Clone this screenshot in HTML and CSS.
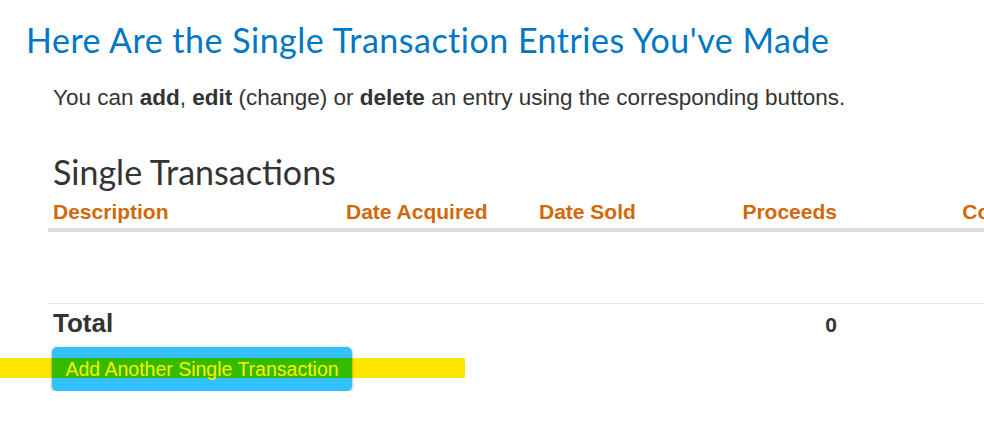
FILE: index.html
```html
<!DOCTYPE html>
<html lang="en">
<head>
<meta charset="UTF-8" />
<title>Single Transactions</title>
<link rel="stylesheet" href="styles.css">
</head>
<body>

<div id="page">
  <h1 class="page-title">Here Are the Single Transaction Entries You've Made</h1>
  <p class="intro">You can <b>add</b>, <b>edit</b> (change) or <b>delete</b> an entry using the corresponding buttons.</p>

  <div class="section">
    <h2 class="section-title">Single Transactions</h2>

    <div class="table">
      <div class="row head">
        <div class="cell">Description</div>
        <div class="cell">Date Acquired</div>
        <div class="cell">Date Sold</div>
        <div class="cell num">Proceeds</div>
        <div class="cell num">Cost</div>
      </div>
      <div class="rows-empty"></div>
      <div class="row total">
        <div class="cell label">Total</div>
        <div class="cell"></div>
        <div class="cell"></div>
        <div class="cell num">0</div>
        <div class="cell"></div>
      </div>
    </div>

    <div class="actions">
      <div class="marker"></div>
      <button class="add-btn">Add Another Single Transaction</button>
    </div>
  </div>
</div>

</body>
</html>
```

FILE: styles.css
```css
body {
  margin: 0;
  font-family: "Liberation Sans", Arial, sans-serif;
  color: #333;
  background: #fff;
  overflow: hidden;
}
#page {
  padding: 20px 0 0 26px;
}
.page-title {
  font-family: Lato, "Open Sans", sans-serif;
  font-weight: 400;
  font-size: 34px;
  letter-spacing: 0.5px;
  color: #0077c5;
  margin: 0;
  line-height: 40px;
}
.intro {
  font-size: 22.5px;
  margin: 25px 0 0 27px;
  line-height: 26px;
}
.section {
  margin: 41px 0 0 22px;
}
.section-title {
  font-family: Lato, "Open Sans", sans-serif;
  font-weight: 400;
  font-size: 34px;
  margin: 0 0 0 5px;
  line-height: 40px;
}
.table {
  width: 1100px;
  margin-top: 8px;
}
.row {
  display: grid;
  grid-template-columns: 293px 193px 154px 154px 172px;
}
.cell {
  padding: 0 5px;
  white-space: nowrap;
}
.cell.num {
  text-align: right;
}
.head {
  color: #d0690a;
  font-weight: bold;
  font-size: 21px;
  line-height: 24px;
  padding-bottom: 4px;
  border-bottom: 4px solid #dddddd;
}
.rows-empty {
  height: 71px;
}
.total {
  border-top: 1px solid #e3e3e3;
  align-items: baseline;
  font-weight: bold;
  font-size: 21px;
  line-height: 30px;
  padding-top: 4px;
}
.total .label {
  font-size: 26px;
}
.actions {
  position: relative;
  margin-top: 7px;
}
.marker {
  position: absolute;
  left: -48px;
  top: 11px;
  width: 465px;
  height: 20px;
  background: #ffe600;
}
.add-btn {
  position: relative;
  display: block;
  margin-left: 4px;
  width: 300px;
  height: 44px;
  border: none;
  border-radius: 5px;
  background: linear-gradient(#33c0ff 11px, #33bb00 11px, #33bb00 31px, #33c0ff 31px);
  box-shadow: 0 1px 3px rgba(0, 0, 0, 0.45);
  color: #ffee00;
  font-family: "Liberation Sans", Arial, sans-serif;
  font-size: 19.5px;
  padding: 0;
  cursor: pointer;
}
```
